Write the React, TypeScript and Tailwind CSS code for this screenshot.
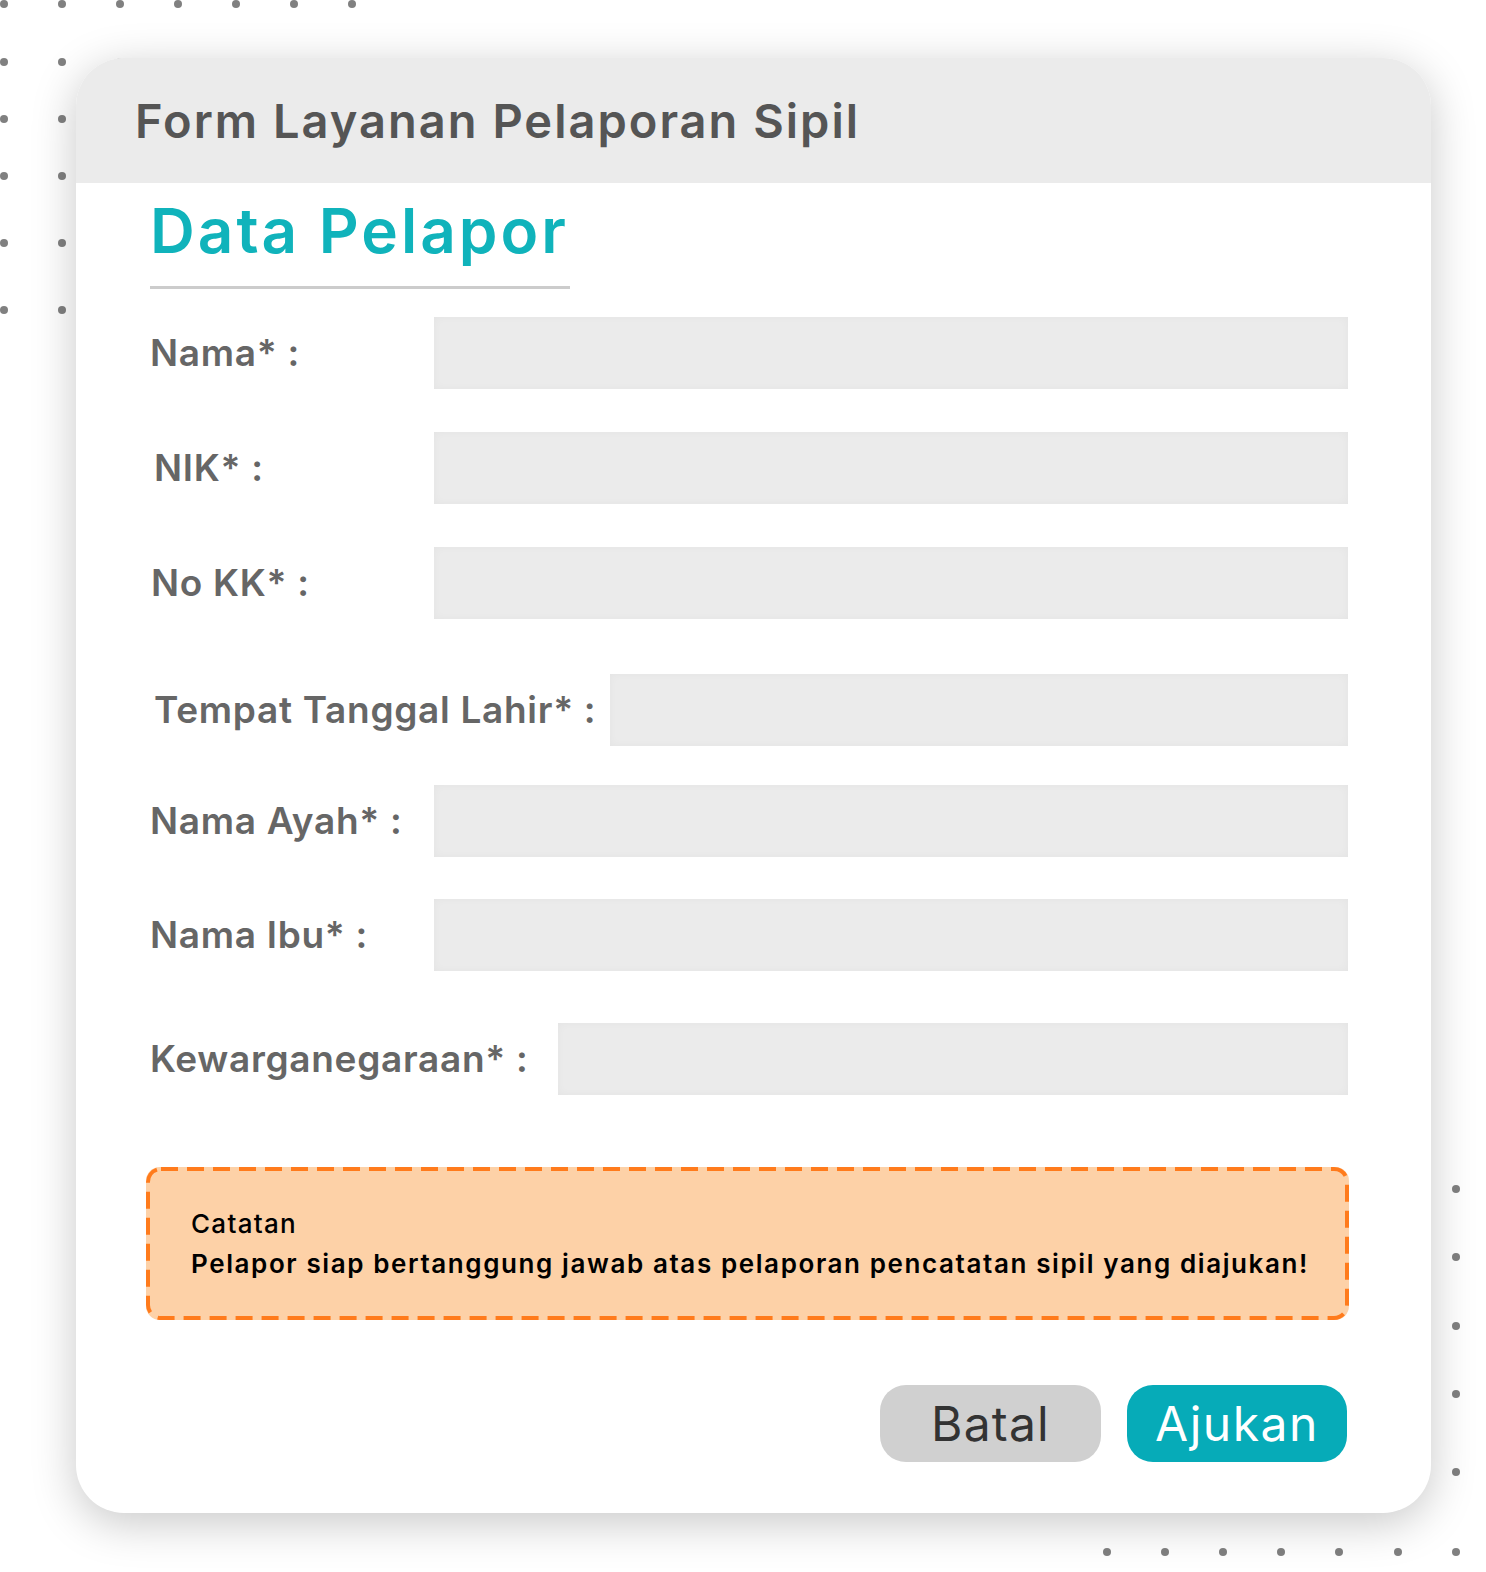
import React from "react";

const dots: [number, number][] = [
  [4, 4], [62, 4], [120, 4], [178, 4], [236, 4], [294, 4], [352, 4],
  [4, 62], [62, 62], [120, 62], [178, 62], [236, 62], [294, 62], [352, 62],
  [4, 119], [62, 119], [4, 176], [62, 176], [4, 243], [62, 243], [4, 310], [62, 310],
  [1456, 1189], [1456, 1257], [1456, 1326], [1456, 1394], [1456, 1472],
  [1107, 1552], [1165, 1552], [1223, 1552], [1281, 1552], [1339, 1552], [1398, 1552], [1456, 1552],
];

const font = { fontFamily: "Inter, 'Noto Sans', sans-serif" };

function Row({ label, labelW, mt, pl }: { label: string; labelW: string; mt: string; pl?: string }) {
  return (
    <div className={`flex items-center ${mt}`}>
      <div className={`${labelW} shrink-0 ${pl ?? ""} text-[37px] font-semibold text-[#666666] tracking-[0.7px]`}>{label}</div>
      <div className="h-[72px] flex-1 bg-[#ebebeb] shadow-[inset_0_0_8px_rgba(0,0,0,0.035)]" />
    </div>
  );
}

export default function App() {
  return (
    <div className="relative w-[1486px] h-[1572px] bg-white overflow-hidden" style={font}>
      {dots.map(([x, y], i) => (
        <span
          key={i}
          className="absolute w-[8px] h-[8px] rounded-full bg-[#808080]"
          style={{ left: x - 4, top: y - 4 }}
        />
      ))}
      <div className="relative ml-[76px] mt-[58px] w-[1355px] h-[1455px] bg-white rounded-[48px] overflow-hidden shadow-[0_10px_45px_rgba(0,0,0,0.22)] flex flex-col">
        <div className="h-[125px] bg-[#ebebeb] pl-[59px] flex items-center shrink-0">
          <div className="text-[47px] font-semibold text-[#555555] leading-none tracking-[2px]">Form Layanan Pelaporan Sipil</div>
        </div>
        <div className="pl-[74px] pr-[83px] flex flex-col">
          <div className="w-[420px] mt-[17px]">
            <div className="text-[62px] font-semibold text-[#10b3bb] leading-none h-[69px] tracking-[3px]">Data Pelapor</div>
            <div className="h-[3px] bg-[#cccccc] mt-[17px]" />
          </div>
          <Row label="Nama* :" labelW="w-[284px]" mt="mt-[28px]" />
          <Row label="NIK* :" labelW="w-[284px]" mt="mt-[43px]" pl="pl-[4px]" />
          <Row label="No KK* :" labelW="w-[284px]" mt="mt-[43px]" pl="pl-[1px]" />
          <Row label="Tempat Tanggal Lahir* :" labelW="w-[460px]" mt="mt-[55px]" pl="pl-[4px]" />
          <Row label="Nama Ayah* :" labelW="w-[284px]" mt="mt-[39px]" />
          <Row label="Nama Ibu* :" labelW="w-[284px]" mt="mt-[42px]" />
          <Row label="Kewarganegaraan* :" labelW="w-[408px]" mt="mt-[52px]" />
        </div>
        <div className="relative ml-[70px] mr-[82px] mt-[72px] h-[153px] rounded-[14px] bg-[#fdd1a7] flex flex-col justify-center pl-[45px] text-black">
          <svg className="absolute inset-0 w-full h-full" preserveAspectRatio="none">
            <rect x="2" y="2" width="calc(100% - 4px)" height="calc(100% - 4px)" rx="13" ry="13" fill="none" stroke="#ff7b1c" strokeWidth="4" strokeDasharray="17 9" />
          </svg>
          <div className="relative text-[26px] font-medium leading-[40px] tracking-[1.3px]">Catatan</div>
          <div className="relative text-[26px] font-semibold leading-[40px] tracking-[1.6px]">Pelapor siap bertanggung jawab atas pelaporan pencatatan sipil yang diajukan!</div>
        </div>
        <div className="mt-[65px] pr-[84px] flex justify-end gap-[26px]">
          <button className="w-[221px] h-[77px] rounded-[26px] bg-[#d0d0d0] text-[#333333] text-[48px] font-normal tracking-[1.2px] flex items-center justify-center">Batal</button>
          <button className="w-[220px] h-[77px] rounded-[26px] bg-[#06abb8] text-white text-[48px] font-normal tracking-[1.5px] flex items-center justify-center">Ajukan</button>
        </div>
      </div>
    </div>
  );
}
